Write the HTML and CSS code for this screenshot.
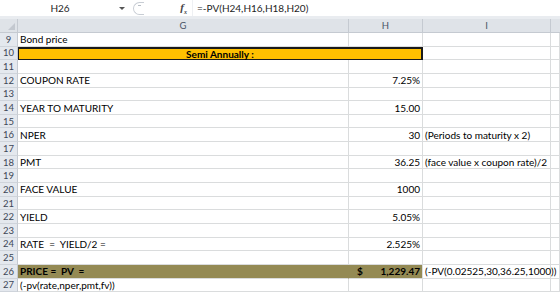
FILE: index.html
```html
<!DOCTYPE html>
<html lang="en">
<head>
    <meta charset="UTF-8">
    <title>Bond price</title>
    <link rel="stylesheet" href="styles.css">
</head>
<body>
    <div class="formula-bar">
        <div class="namebox">H26<span class="arrow"></span></div>
        <div class="grip"><span></span></div>
        <div class="fx">f<sub>x</sub></div>
        <div class="formula">=-PV(H24,H16,H18,H20)</div>
    </div>
    <div class="sheet">
        <div class="hd corner"></div>
        <div class="hd">G</div>
        <div class="hd">H</div>
        <div class="hd">I</div>
        <div class="hd last"></div>

        <div class="rn">9</div><div class="c">Bond price</div><div class="c"></div><div class="c"></div><div class="c"></div>
        <div class="rn">10</div><div class="c title">Semi Annually :</div><div class="c"></div><div class="c"></div>
        <div class="rn">11</div><div class="c"></div><div class="c"></div><div class="c"></div><div class="c"></div>
        <div class="rn">12</div><div class="c">COUPON RATE</div><div class="c num">7.25%</div><div class="c"></div><div class="c"></div>
        <div class="rn">13</div><div class="c"></div><div class="c"></div><div class="c"></div><div class="c"></div>
        <div class="rn">14</div><div class="c">YEAR TO MATURITY</div><div class="c num">15.00</div><div class="c"></div><div class="c"></div>
        <div class="rn">15</div><div class="c"></div><div class="c"></div><div class="c"></div><div class="c"></div>
        <div class="rn">16</div><div class="c">NPER</div><div class="c num">30</div><div class="c note">(Periods to maturity x 2)</div><div class="c"></div>
        <div class="rn">17</div><div class="c"></div><div class="c"></div><div class="c"></div><div class="c"></div>
        <div class="rn">18</div><div class="c">PMT</div><div class="c num">36.25</div><div class="c note">(face value x coupon rate)/2</div><div class="c"></div>
        <div class="rn">19</div><div class="c"></div><div class="c"></div><div class="c"></div><div class="c"></div>
        <div class="rn">20</div><div class="c">FACE VALUE</div><div class="c num">1000</div><div class="c"></div><div class="c"></div>
        <div class="rn">21</div><div class="c"></div><div class="c"></div><div class="c"></div><div class="c"></div>
        <div class="rn">22</div><div class="c">YIELD</div><div class="c num">5.05%</div><div class="c"></div><div class="c"></div>
        <div class="rn">23</div><div class="c"></div><div class="c"></div><div class="c"></div><div class="c"></div>
        <div class="rn">24</div><div class="c">RATE&nbsp; = &nbsp;YIELD/2 =</div><div class="c num">2.525%</div><div class="c"></div><div class="c"></div>
        <div class="rn">25</div><div class="c"></div><div class="c"></div><div class="c"></div><div class="c"></div>
        <div class="rn">26</div><div class="c price">PRICE =&nbsp; PV&nbsp; =</div><div class="c price money"><span>$</span><span>1,229.47</span></div><div class="c note">(-PV(0.02525,30,36.25,1000))</div><div class="c"></div>
        <div class="rn">27</div><div class="c">(-pv(rate,nper,pmt,fv))</div><div class="c"></div><div class="c"></div><div class="c"></div>
    </div>
</body>
</html>
```

FILE: styles.css
```css
body {
    margin: 0;
    background: #ffffff;
    font-family: Lato, "Liberation Sans", sans-serif;
    font-size: 10px;
    color: #000000;
    overflow: hidden;
}

/* formula bar */
.formula-bar {
    display: flex;
    align-items: center;
    height: 16px;
    background: #ffffff;
    border-bottom: 3px solid #e9ecf0;
}
.namebox {
    position: relative;
    width: 130px;
    height: 16px;
    line-height: 16px;
    text-align: center;
    padding-right: 10px;
    box-sizing: border-box;
    color: #1e1e1e;
}
.arrow {
    position: absolute;
    right: 5px;
    top: 7px;
    border-left: 3px solid transparent;
    border-right: 3px solid transparent;
    border-top: 3px solid #555555;
}
.grip {
    width: 11px;
    height: 13px;
    margin-left: 3px;
    border: 1px solid #c8cdd4;
    border-right: none;
    border-radius: 7px 0 0 7px;
    box-sizing: border-box;
    display: flex;
    align-items: center;
    justify-content: center;
}
.grip span {
    width: 3px;
    height: 1px;
    background: #b8bec6;
    margin-top: -5px;
}
.fx {
    width: 48px;
    text-align: right;
    padding-right: 5px;
    box-sizing: border-box;
    font-family: "Liberation Serif", serif;
    font-style: italic;
    font-weight: bold;
    font-size: 11px;
    color: #444444;
}
.fx sub {
    font-size: 6px;
}
.formula {
    flex: 1;
    height: 16px;
    line-height: 16px;
    padding-left: 4px;
    border-left: 1px solid #eef0f3;
    color: #1e1e1e;
}

/* grid */
.sheet {
    display: grid;
    grid-template-columns: 18px 331px 74px 128px 9px;
    grid-template-rows: 14px repeat(19, 13.65px);
}
.hd {
    background: #dfe3e8;
    border-right: 1px solid #c5cad1;
    border-bottom: 1px solid #c5cad1;
    box-sizing: border-box;
    text-align: center;
    line-height: 13px;
    font-size: 9.5px;
    color: #4a5566;
}
.hd.last {
    border-right: none;
}
.corner {
    position: relative;
}
.corner::after {
    content: "";
    position: absolute;
    right: 2px;
    bottom: 2px;
    border-left: 7px solid transparent;
    border-bottom: 7px solid #c3c8cf;
}
.rn {
    background: #e4e8ee;
    border-right: 1px solid #c5cad1;
    border-bottom: 1px solid #cfd4db;
    box-sizing: border-box;
    text-align: center;
    font-size: 9.5px;
    color: #3d4757;
    display: flex;
    align-items: center;
    justify-content: center;
}
.c {
    border-right: 1px solid #dadcdd;
    border-bottom: 1px solid #dadcdd;
    box-sizing: border-box;
    padding: 0 2px;
    display: flex;
    align-items: center;
    white-space: nowrap;
    overflow: visible;
}
.num {
    justify-content: flex-end;
}
.title {
    grid-column: span 2;
    justify-content: center;
    background: #ffc000;
    border: 1px solid #1a1a1a;
    border-top-width: 2px;
    border-right-width: 2px;
    font-weight: bold;
}
.price {
    background: #948a54;
    font-weight: bold;
    border-right-color: #948a54;
}
.money {
    justify-content: space-between;
    padding-left: 8px;
    border-right-color: #dadcdd;
}
```
